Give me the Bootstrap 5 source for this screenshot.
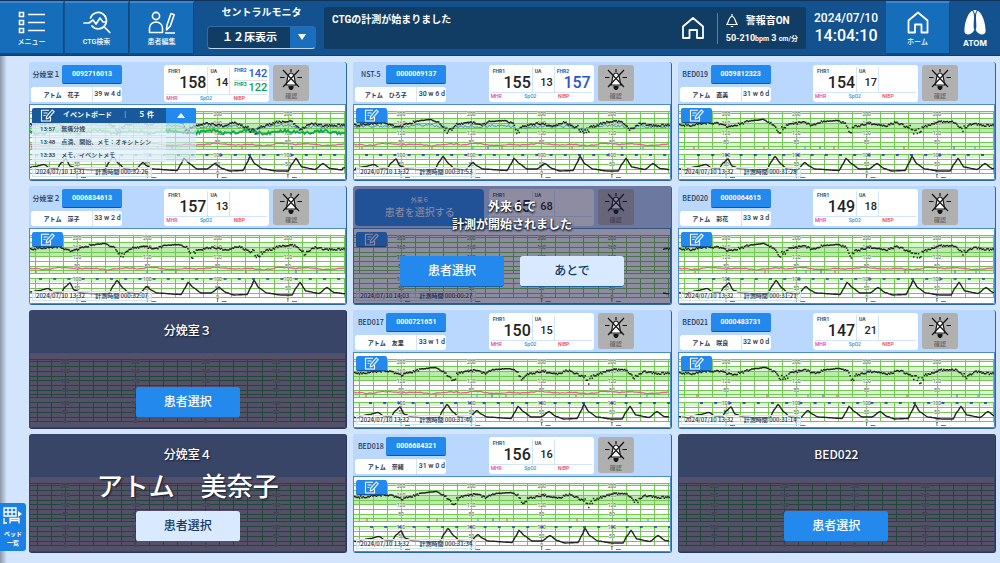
<!DOCTYPE html>
<html lang="ja">
<head>
<meta charset="utf-8">
<meta name="viewport" content="width=device-width, initial-scale=1">
<title>セントラルモニタ</title>
<link href="https://cdn.jsdelivr.net/npm/bootstrap@5.3.0/dist/css/bootstrap.min.css" rel="stylesheet">
<style>
  :root { --cm-head: #bad7fe; --cm-blue: #2489ec; --cm-navy: #12395f; }
  body { font-family: Roboto, "Noto Sans CJK JP", sans-serif; background: #d3e5fd; color: #1d3654; line-height: 1; }
  button, select { font-family: inherit; line-height: 1; }
  svg { display: block; flex: none; }

  /* top bar */
  .topbar { height: 56px; background: #13528e; border-top: 1px solid #10335a; border-bottom: 1px solid #0f3f70; color: #fff; }
  .nav-tile { width: 64px; background: #166db9; color: #fff; border: 0; border-top: 2px solid #3a86d6; border-bottom: 2px solid #0f4b85; border-right: 1px solid #10477d; font-size: 7px; font-weight: 500; padding: 0; gap: 5px; margin-right: 1px; }
  .tile-home { margin: 0; }
  .mon-title { font-size: 10px; font-weight: 700; }
  .bed-count { width: 109px; height: 23px; color: #fff; font-size: 11px; font-weight: 700; text-align: center; border: 1px solid #2b6cab; border-bottom-color: #bcd6f2; border-radius: 4px; appearance: none; padding: 0 24px 0 0;
    background: url("data:image/svg+xml,%3Csvg xmlns='http://www.w3.org/2000/svg' width='8' height='6'%3E%3Cpath d='M0 0h8L4 6z' fill='white'/%3E%3C/svg%3E") no-repeat right 9px center, linear-gradient(90deg, #113c63 82px, #1a6fbd 82px); }
  .msg-box { background: #113c63; border-radius: 3px; min-width: 0; margin: 6px 0; }
  .msg-text { font-size: 10px; font-weight: 700; padding: 8px; }
  .alarm-box { border-left: 1px solid #5d7f9f; height: 31px; padding: 1px 8px; font-weight: 700; }
  .alarm-title { font-size: 10px; }
  .alarm-range { font-size: 9px; white-space: nowrap; }
  .alarm-range small { font-size: 7px; }
  .clock-box { width: 80px; font-weight: 500; }
  .clock-date { font-size: 12px; }
  .clock-time { font-size: 16px; }
  .brand-box { width: 50px; }
  .brand-name { font: 700 8px "Inter", sans-serif; line-height: 1; }

  /* side tab */
  .side-rail { width: 29px; padding-bottom: 12px; background: linear-gradient(90deg, #8c97a8, rgba(211,229,253,0) 7px); }
  .bed-tab { width: 26px; height: 48px; background: #1b80e4; color: #fff; border: 0; border-radius: 0 3px 3px 0; font-size: 6px; font-weight: 700; line-height: 9px; padding: 0; }

  /* bed grid */
  .bed-grid { display: grid; grid-template-columns: repeat(3, minmax(0, 1fr)); grid-auto-rows: minmax(118px, 1fr); gap: 5px 6px; padding: 6px 4px 10px 0; }
  .bed { background: var(--cm-head); border-radius: 3px; border-right: 1px solid #2c669e; border-bottom: 1px solid #2c669e; overflow: hidden; min-width: 0; }
  .bed-head { height: 42px; padding: 3px 37px 2px 2px; flex: none; }
  .bed-label { width: 31px; font-size: 7px; font-weight: 500; text-align: center; white-space: nowrap; font-family: "Noto Sans CJK JP", sans-serif; }
  .id-btn { width: 60px; height: 19px; background: var(--cm-blue); color: #fff; border: 0; border-bottom: 1px solid #14589c; border-radius: 2px; font-size: 7px; font-weight: 700; padding: 0; }
  .name-box { height: 15px; width: 91px; background: #fff; border-radius: 3px; font-size: 6px; font-weight: 700; }
  .name-box .week { width: 30px; border-left: 1px solid #d3e5fd; font-weight: 500; font-size: 7px; white-space: nowrap; }
  .vitals { width: 105px; height: 37px; background: #fff; border-radius: 3px; color: #222; font-weight: 500; padding: 2px; }
  .vitals .cell { border-right: 1px solid #d3e5fd; padding: 1px 1px 0 2px; }
  .vitals .cell:last-child { border-right: 0; }
  .cell-extra { width: 37px; }
  .tag { font-size: 5px; font-weight: 700; color: #45505c; line-height: 6px; }
  .num-l { font-size: 16px; line-height: 18px; text-align: right; }
  .num-m { font-size: 11px; line-height: 18px; text-align: right; }
  .num-s { font-size: 11px; line-height: 13px; }
  .c-blue, .c-blue .tag { color: #2558cf; }
  .c-green, .c-blue .c-green .tag { color: #0c9f56; }
  .foot-tags { font-size: 5px; line-height: 7px; border-top: 1px solid #d3e5fd; }
  .t-mhr { color: #e8409a; }
  .t-spo2 { color: #2196d0; }
  .t-nibp { color: #ee3b4c; }
  .mute-btn { width: 36px; height: 36px; background: #b0b0b0; border: 0; border-radius: 3px; font-size: 6px; font-weight: 500; color: #666; padding: 0; gap: 2px; }
  .pick-btn { width: 129px; height: 37px; background: var(--cm-blue); color: #fff; border: 0; border-radius: 4px; padding: 0; gap: 5px; }
  .pick-btn .sm { font-size: 6px; }
  .pick-btn .lg { font-size: 10px; }

  .chart-box { background: #fff; border: 1px solid #4c8cc8; overflow: hidden; min-height: 75px; }
  .chart-box svg.trace { width: 100%; height: 73px; overflow: hidden; }
  .chart-box text { font: 5px Roboto, sans-serif; text-anchor: middle; fill: #5c6c5c; paint-order: stroke; stroke: #e4f6dd; stroke-width: 1px; }
  .edit-btn { left: 2px; top: 3px; width: 31px; height: 15px; background: var(--cm-blue); border: 0; border-bottom: 1px solid #14589c; border-radius: 2px; padding: 0; }
  .stamp { left: 2px; bottom: 2px; height: 10px; width: 120px; font-size: 6px; font-weight: 500; background: rgba(255,255,255,.45); border: 1px solid #cfe4f6; white-space: nowrap; color: #12344f; padding: 0 3px; font-family: "Noto Sans CJK JP", sans-serif; }

  /* event board */
  .board { left: 2px; top: 3px; width: 164px; }
  .board-head { height: 15px; background: #17599a; color: #fff; font-size: 7px; font-weight: 700; border-radius: 2px 2px 0 0; overflow: hidden; }
  .board-toggle { width: 30px; background: var(--cm-blue); border: 0; padding: 0; }
  .board-list { background: rgba(210,229,249,.62); font-size: 6px; font-weight: 500; margin: 0; }
  .board-list li { height: 13px; padding-left: 8px; gap: 6px; margin-right: 30px; background: rgba(240,248,255,.5); border-bottom: 1px solid rgba(200,220,240,.6); }

  /* covered beds */
  .veil { inset: 0; background: rgba(30,25,65,.5); color: #fff; text-shadow: 0 1px 2px #10182c, 1px 1px 2px #10182c; }
  .veil-msg { font-size: 12px; font-weight: 700; line-height: 18px; padding-top: 12px; margin-bottom: 22px; }
  .bed-off { background: #394567; border-color: #26365a; color: #fff; }
  .bed-off .chart-box { background: #545068; border-color: #33446c; }
  .bed-off text { fill: #2d3842; stroke: #545068; }
  .off-layer { inset: 0; text-shadow: 1px 1px 2px #10182c; }
  .off-title { font-size: 12px; font-weight: 500; padding-top: 14px; height: 37px; font-family: "Noto Sans CJK JP", sans-serif; }
  .off-name { font-size: 26px; font-weight: 500; line-height: 32px; height: 40px; }
  .act-btn { width: 104px; height: 31px; border: 0; border-bottom: 1px solid #1a5fa8; border-radius: 3px; background: var(--cm-blue); color: #fff; font-size: 12px; font-weight: 500; padding: 0; }
  .act-btn.pale { background: #d9e9ff; color: var(--cm-navy); }
</style>
</head>
<body class="d-flex flex-column min-vh-100">

<header class="topbar d-flex align-items-stretch">
  <button class="nav-tile d-flex flex-column align-items-center justify-content-center" type="button">
    <svg width="28" height="23" viewBox="0 0 28 23" fill="none" stroke="#fff" stroke-width="1.6"><path d="M1.500 1.500h4v4h-4zM1.500 9.500h4v4h-4zM1.500 17.500h4v4h-4zM10 3.500h17M10 11.500h17M10 19.500h17"/></svg>
    <span>メニュー</span>
  </button>
  <button class="nav-tile d-flex flex-column align-items-center justify-content-center" type="button">
    <svg width="28" height="23" viewBox="0 0 28 23" fill="none" stroke="#fff" stroke-width="1.7" stroke-linecap="round" stroke-linejoin="round"><path d="M7.500 7A8.200 8.200 0 1 1 9 15M20.800 15.500l6 6M1 12h5l4-3 3 4 4-6 3 4h2.500"/></svg>
    <span>CTG検索</span>
  </button>
  <button class="nav-tile d-flex flex-column align-items-center justify-content-center" type="button">
    <svg width="28" height="23" viewBox="0 0 28 23" fill="none" stroke="#fff" stroke-width="1.6" stroke-linejoin="round"><circle cx="8" cy="5" r="3.600"/><path d="M1.500 21.500v-4.500a6.500 6 0 0 1 13 0v4.500zM17 22h10M18.500 19l.5-5 4-11.500 3.200 1.200-4 11.500z"/></svg>
    <span>患者編集</span>
  </button>

  <div class="d-flex flex-column align-items-center justify-content-center gap-2 px-2 ms-1">
    <label class="mon-title" for="bedCount">セントラルモニタ</label>
    <select id="bedCount" class="bed-count"><option>１２床表示</option></select>
  </div>

  <div class="msg-box d-flex flex-fill align-items-center">
    <div class="msg-text align-self-start flex-fill">CTGの計測が始まりました</div>
    <svg class="me-2" width="24" height="24" viewBox="0 0 24 24" fill="none" stroke="#fff" stroke-width="1.8" stroke-linejoin="round"><path d="M2 10.500 12 2l10 8.500V22h-6v-8H8.500v8H2z"/></svg>
    <div class="alarm-box d-flex flex-column justify-content-between ms-1">
      <div class="d-flex align-items-center gap-2 alarm-title">
        <svg width="12" height="14" viewBox="0 0 12 14" fill="none" stroke="#fff" stroke-width="1.200" stroke-linejoin="round"><path d="M6 0v2M.8 10.500C3 8.500 2.500 2.500 6 2.500s3 6 5.200 8zM4.800 12.500h2.400"/></svg>
        <span>警報音ON</span>
      </div>
      <div class="alarm-range">50-210<small>bpm</small> 3 <small>cm/分</small></div>
    </div>
  </div>

  <div class="clock-box d-flex flex-column align-items-center justify-content-center gap-1">
    <div class="clock-date">2024/07/10</div>
    <div class="clock-time">14:04:10</div>
  </div>
  <button class="nav-tile tile-home d-flex flex-column align-items-center justify-content-center" type="button">
    <svg width="24" height="23" viewBox="0 0 24 23" fill="none" stroke="#fff" stroke-width="1.8" stroke-linejoin="round"><path d="M2.500 9.500 12 1.500l9.500 8V21.500H15.500v-8H9v8H2.500z"/></svg>
    <span>ホーム</span>
  </button>
  <div class="brand-box d-flex flex-column align-items-center justify-content-center gap-1">
    <svg width="22" height="25" viewBox="0 0 22 25" fill="#fff"><path d="M10 8C9.800 14 9.200 17 10.300 20 8 25 1.500 26 .5 22 0 15 3 4 8 .8c1.600 1.200 2.100 3.600 2 7.200zM12 8c.2 6 .8 9-.3 12 2.300 5 8.800 6 9.800 2C22 15 19 4 14 .8c-1.600 1.200-2.100 3.600-2 7.200z"/><path d="M9 .6c1-.8 3-.8 4 0-1.200 1.200-2 3-2 4.500C11 3.600 10.200 1.800 9 .6z"/></svg>
    <span class="brand-name">ATOM</span>
  </div>
</header>

<main class="d-flex flex-fill">
  <aside class="side-rail d-flex flex-column justify-content-end">
    <button class="bed-tab d-flex flex-column align-items-center justify-content-center gap-1" type="button">
      <svg width="20" height="18" viewBox="0 0 20 18" fill="none" stroke="#fff" stroke-width="1.300"><path d="M1 1h12v8H1zM1 5h12M5 1v8M9 1v8M1 11v6M1 16h3M7 16.500v-5h9v5M7 13.500h9"/><path d="M15 4l4 3-4 3z" fill="#fff" stroke="none"/></svg>
      <span>ベッド<br>一覧</span>
    </button>
  </aside>
  <section id="beds" class="bed-grid flex-fill"></section>
</main>

<script>
const beds = [
  {label: '分娩室１', id: '0092716013', name: 'アトム　花子', week: '39 w 4 d', fhr: 158, ua: 14, fhr2: 142, fhr3: 122, start: '13:31', len: '000:32:26', shift: -4, pink: 1, blue: 1, green: 1, board: 1},
  {label: 'NST-5', id: '0000069137', name: 'アトム　ひろ子', week: '30 w 6 d', fhr: 155, ua: 13, fhr2: 157, start: '13:32', len: '000:31:53', shift: 2, pink: 1, blue: 1},
  {label: 'BED019', id: '0059812323', name: 'アトム　直美', week: '31 w 6 d', fhr: 154, ua: 17, start: '13:32', len: '000:31:28', shift: 9},
  {label: '分娩室２', id: '0006834613', name: 'アトム　涼子', week: '33 w 2 d', fhr: 157, ua: 13, start: '13:32', len: '000:32:07', shift: 0, pink: 1},
  {pick: '外来６', fhr: 45, ua: 68, start: '14:03', len: '000:00:27', shift: 0, from: 309},
  {label: 'BED020', id: '0000064615', name: 'アトム　彩花', week: '33 w 3 d', fhr: 149, ua: 18, start: '13:32', len: '000:31:21', shift: 10, pink: 1},
  {off: '分娩室３'},
  {label: 'BED017', id: '0000721651', name: 'アトム　友里', week: '33 w 1 d', fhr: 150, ua: 15, start: '13:32', len: '000:31:40', shift: 6, pink: 1},
  {label: 'BED021', id: '0000483731', name: 'アトム　咲良', week: '32 w 0 d', fhr: 147, ua: 21, start: '13:32', len: '000:31:14', shift: 12},
  {off: '分娩室４', offName: 'アトム　美奈子'},
  {label: 'BED018', id: '0006684321', name: 'アトム　奈緒', week: '31 w 0 d', fhr: 156, ua: 16, start: '13:32', len: '000:31:34', shift: 7},
  {off: 'BED022'}
];
const events = [['13:57', '無痛分娩'], ['13:48', '点滴、開始、メモ：オキシトシン'], ['13:33', 'メモ、イベントメモ']];

const pen = '<svg class="mx-auto" width="15" height="13" viewBox="0 0 15 13" fill="none" stroke="#fff" stroke-width="1.100" stroke-linejoin="round"><path d="M9 1.200H1.500v10.800h9V8M12.200 1l2 1.600-5.400 6.300-2.600 1 .6-2.700zM3.500 4h4M3.500 6.500h2"/></svg>';
const bell = '<svg width="22" height="23" viewBox="0 0 22 23" fill="none" stroke="#151515" stroke-width="1.200"><path d="M6 17C8 13 6.500 5 11 5s3 8 5 12z" fill="#fff"/><path d="M11 1v3M3 2l16 17M19 2L3 19M0 9.500h4.500M17.500 9.500H22"/><path d="M8.500 18h5v2l-1.500 2h-2l-1.500-2z" fill="#151515" stroke="none"/></svg>';

// Keyframes of the traces, [x, y], repeated every PERIOD pixels
const PERIOD = 317;
const FHR = [[0,21.5],[11,19.5],[28,19],[41,23],[51,20],[61,17],[74,15.500],[82,19],[91,27],[95,25],[99,20.5],[114,18.500],[124,21.5],[134,17.500],[148,16.500],[156,19],[161,29],[166,22.5],[181,19.5],[197,22],[207,18.500],[221,24],[228,29],[234,23],[251,18],[264,17.500],[274,25],[284,19.5],[297,21.5],[317,21]];
const UA = [[0,62],[9,60.5],[18,58.5],[24,62],[31,63],[35,57],[40,53],[44,60],[52,63],[66,64],[79,63.5],[83,56],[87,50.500],[93,58],[99,63],[109,64],[117,56.500],[121,60],[127,63],[151,64.500],[155,58],[158,52.500],[164,58],[171,63],[181,63],[189,57.5],[196,62.5],[204,65],[217,64.5],[221,57],[224,50.5],[229,58],[237,63],[251,65],[262,65],[266,58],[270,52.500],[276,61],[289,63.5],[297,57.5],[304,62.5],[317,64]];
const at = (keys, x) => {
  x = ((x % PERIOD) + PERIOD) % PERIOD;
  let i = 1;
  while (keys[i][0] < x && i < keys.length - 1) i++;
  const [a, b] = [keys[i - 1], keys[i]], t = (x - a[0]) / (b[0] - a[0]);
  return a[1] + (b[1] - a[1]) * (t + t * t * (3 - 2 * t)) / 2;
};
const noise = n => { const s = Math.sin(n * 127.1 + 3.7) * 43758.5453; return s - Math.floor(s) - .5; };

function chart(b, W) {
  const line = (f, from, step) => { let d = ''; for (let x = from; x < W; x += step) d += (d ? 'L' : 'M') + x + ' ' + f(x).toFixed(1); return d; };
  const off = !!b.off, x0 = off ? 35 : 47, g = off ? '#23463c' : '#74c655', s = b.shift || 0, from = b.from || 0;
  let o = '';
  if (!off && !b.pick) o += `<path fill="#daf5d1" d="M0 6h${W}v3H0zM0 14h${W}v4H0zM0 37h${W}v7H0zM0 49h${W}v4H0z"/><path fill="#b9ebaa" d="M0 18h${W}v10H0z"/>`;
  let h = '', v = '';
  for (const y of [6.5, 8.5, 13.5, 18.5, 23.5, 27.5, 32.5, 37.5, 41.5, 44.5, 49.5, 54.5, 59.5, 64.5, 68.5]) h += `M0 ${y}H${W}`;
  for (let x = x0 - 42; x < W; x += 14.06) v += `M${Math.floor(x) + .5} 6V45M${Math.floor(x) + .5} 49V69`;
  o += `<path d="${h}${v}" stroke="${g}" stroke-width="1" shape-rendering="crispEdges"/>`;
  for (let x = x0; x < W; x += 70.3) {
    for (const [t, y] of [[200, 9], [160, 18], [120, 28], [80, 37], [100, 50], [50, 59], [0, 68]]) {
      if (b.board && x < 164 && y < 20) continue;
      o += `<text x="${x}" y="${y + 2}">${t}</text>`;
    }
    if (!off) o += `<path d="M${x} 69v4M${x + 4} 72.500h5" stroke="#555" stroke-width=".8"/>`;
  }
  if (off) return o;
  for (let x = 9 + s % 14; x < W; x += 14.2) if (x > from) o += `<path d="M${x.toFixed(1)} 50h3" stroke="#1320c4" stroke-width="1.300"/>`;
  if (!b.pick) [['#f0424c', 6], ['#f0424c', 76], ['#25a5d8', 117], ['#2558cf', 132], ['#f0424c', 146], ['#f0424c', 216], ['#2558cf', 266], ['#25a5d8', 287]].forEach(([c, x]) => o += `<path d="M${x + s} 41.500v2.500" stroke="${c}" stroke-width="1"/>`);
  if (b.pink) o += `<path d="${line(x => 39.5 + 1.2 * Math.sin(x / 17) * Math.sin(x / 7) + noise(x), 0, 2)}" stroke="#f0569b" stroke-width="1.200" fill="none"/>`;
  if (b.blue) o += `<path d="${line(x => at(FHR, x - s) * .3 + 15.500 + 3 * noise(x + 9), 0, 1.5)}" stroke="#4b86e0" stroke-width="1" fill="none"/>`;
  if (b.green) o += `<path d="${line(x => 27 + 1.3 * Math.sin(x / 6) + 3 * noise(x + 5), 0, 1.5)}" stroke="#0ea856" stroke-width="1.800" fill="none"/>`;
  let dots = '';
  for (let x = from; x < W; x += 1.2) {
    const y = at(FHR, x - s), k = y > 24 ? 6 : y < 17.5 ? .5 : 2;
    dots += `M${x.toFixed(1)} ${(y - 1 + k * noise(x)).toFixed(1)}h1.5`;
  }
  o += `<path d="${dots}" stroke="#222" stroke-width="1.500"/>`;
  o += `<path d="${line(x => at(UA, x - s) + 1, from, 1)}" stroke="#222" stroke-width="1.400" fill="none"/>`;
  return o;
}

const chartBox = b => `<div class="chart-box flex-fill position-relative"><svg class="trace" aria-hidden="true"></svg>${b.off ? '' :
  (b.board ? board() : `<button class="edit-btn position-absolute" type="button" aria-label="メモ">${pen}</button>`) +
  `<div class="stamp position-absolute d-flex align-items-center justify-content-between"><span>2024/07/10 ${b.start}</span><span>計測時間 ${b.len}</span></div>`}</div>`;

const board = () => `<div class="board position-absolute"><div class="board-head d-flex align-items-center"><span class="ps-2">${pen}</span><span class="ms-2">イベントボード</span><span class="mx-auto">｜</span><span class="pe-2 me-1">５ 件</span><button class="board-toggle align-self-stretch" type="button" aria-label="閉じる"><svg class="mx-auto" width="8" height="5"><path d="M0 5h8L4 0z" fill="#fff"/></svg></button></div>
  <ul class="board-list list-unstyled">${events.map(e => `<li class="d-flex align-items-center"><span>${e[0]}</span><span>${e[1]}</span></li>`).join('')}</ul></div>`;

const vitals = b => `<div class="vitals ms-auto d-flex flex-column">
  <div class="d-flex flex-fill">
    <div class="cell col-5"><div class="tag">FHR1</div><div class="num-l">${b.fhr}</div></div>
    <div class="cell flex-fill"><div class="tag">UA</div><div class="num-m">${b.ua}</div></div>
    <div class="cell cell-extra ${b.fhr3 ? 'p-0 ps-1' : ''} c-blue">${b.fhr3
      ? `<div class="d-flex justify-content-between"><span class="tag">FHR2</span><span class="num-s">${b.fhr2}</span></div><div class="c-green d-flex justify-content-between border-top"><span class="tag">FHR3</span><span class="num-s">${b.fhr3}</span></div>`
      : b.fhr2 ? `<div class="tag">FHR2</div><div class="num-l">${b.fhr2}</div>` : ''}</div>
  </div>
  <div class="foot-tags d-flex">${b.pick ? '&nbsp;' : '<span class="col-4 t-mhr">MHR</span><span class="col-4 t-spo2">SpO2</span><span class="col-4 t-nibp">NIBP</span>'}</div></div>`;

const patient = b => b.pick
  ? `<button class="pick-btn d-flex flex-column align-items-center justify-content-center" type="button"><span class="sm">${b.pick}</span><span class="lg">患者を選択する</span></button>`
  : `<div class="d-flex flex-column justify-content-between"><div class="d-flex align-items-center"><span class="bed-label">${b.label}</span><button class="id-btn" type="button">${b.id}</button></div>
     <div class="name-box d-flex align-items-center"><span class="flex-fill text-center">${b.name}</span><span class="week text-center py-1">${b.week}</span></div></div>`;

const grid = document.getElementById('beds');
grid.innerHTML = beds.map(b => b.off
  ? `<article class="bed bed-off d-flex flex-column position-relative"><div class="bed-head"></div>${chartBox(b)}
     <div class="off-layer position-absolute d-flex flex-column align-items-center"><div class="off-title">${b.off}</div><div class="off-name">${b.offName || ''}</div>
     <button class="act-btn ${b.offName ? 'pale' : ''}" type="button">患者選択</button></div></article>`
  : `<article class="bed d-flex flex-column position-relative"><div class="bed-head d-flex gap-1">${patient(b)}${vitals(b)}
     <button class="mute-btn d-flex flex-column align-items-center justify-content-center" type="button">${bell}<span>確認</span></button></div>${chartBox(b)}
     ${b.pick ? `<div class="veil position-absolute text-center"><div class="veil-msg">外来６で<br>計測が開始されました</div><div class="d-flex justify-content-center gap-3"><button class="act-btn" type="button">患者選択</button><button class="act-btn pale" type="button">あとで</button></div></div>` : ''}</article>`).join('');

const drawCharts = () => grid.querySelectorAll('svg.trace').forEach((el, i) => { el.innerHTML = chart(beds[i], Math.ceil(el.getBoundingClientRect().width)); });
drawCharts();
window.addEventListener('resize', drawCharts);
</script>
<script src="https://cdn.jsdelivr.net/npm/bootstrap@5.3.0/dist/js/bootstrap.bundle.min.js"></script>
</body>
</html>
